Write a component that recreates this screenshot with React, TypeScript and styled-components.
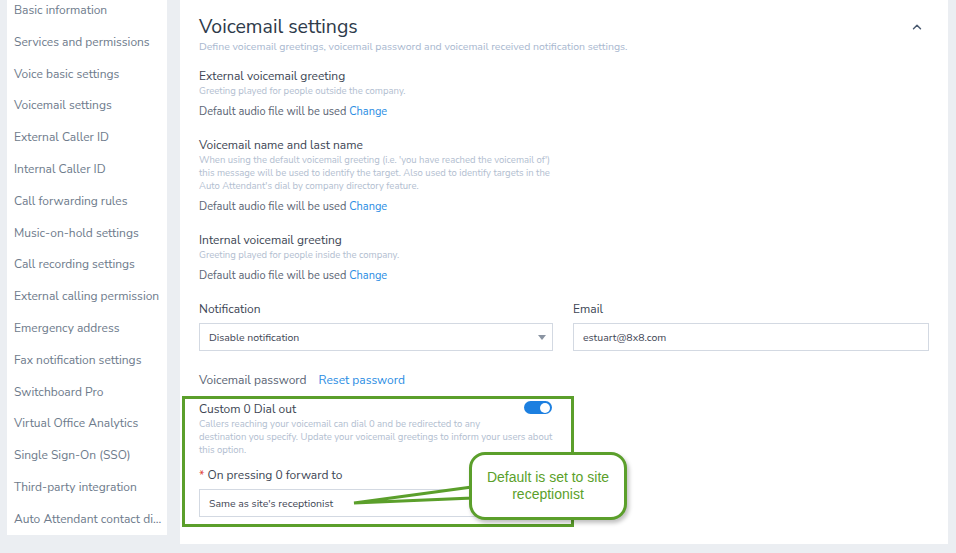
import styled, { createGlobalStyle } from 'styled-components';
import { ChevronUp } from 'lucide-react';

const GlobalStyle = createGlobalStyle`
  html, body {
    margin: 0;
    padding: 0;
    background: #ebeef2;
    font-family: "Nunito Sans", Lato, "Open Sans", sans-serif;
  }
`

const Page = styled.div`
  display: flex;
  align-items: flex-start;
  gap: 13px;
  padding-left: 7px;
  width: 956px;
  height: 553px;
  overflow: hidden;
  box-sizing: border-box;
`
const Sidebar = styled.nav`
  width: 160px;
  height: 535px;
  background: #fff;
  padding-top: 1px;
  box-sizing: border-box;
`
const NavItem = styled.div`
  height: 31.8px;
  line-height: 18px;
  padding: 0 4px 0 7px;
  font-size: 12px;
  color: #6e7b8c;
  white-space: nowrap;
  overflow: hidden;
  text-overflow: ellipsis;
`
const Main = styled.main`
  position: relative;
  width: 768px;
  height: 544px;
  background: #fff;
  padding: 14px 19px 0 19px;
  box-sizing: border-box;
`
const HeaderRow = styled.div`
  display: flex;
  justify-content: space-between;
  align-items: center;
  padding-right: 5px;
  color: #4a5a70;
`
const Title = styled.h1`
  margin: 0;
  font-size: 19.5px;
  font-weight: 400;
  line-height: 26px;
  color: #2e3a4a;
`
const Subtitle = styled.p`
  margin: 0 0 14px;
  font-size: 10.5px;
  line-height: 14px;
  color: #a9b8cf;
`
const Block = styled.section`
  margin-bottom: 18px;
`
const Label = styled.div`
  font-size: 12px;
  line-height: 16px;
  color: #3d4654;
`
const Hint = styled.div`
  font-size: 9.5px;
  line-height: 13px;
  color: #b2bed0;
  max-width: 360px;
`
const AudioLine = styled.div`
  margin-top: 8px;
  font-size: 11px;
  line-height: 14px;
  color: #5b6574;
`
const Link = styled.a`
  color: #2b8de3;
  cursor: pointer;
`
const FieldRow = styled.div`
  display: grid;
  grid-template-columns: 354px 356px;
  gap: 20px;
  margin-top: 18px;
`
const Field = styled.div`
  display: flex;
  flex-direction: column;
  gap: 6px;
`
const Box = styled.div`
  position: relative;
  height: 28px;
  border: 1px solid #d3d9e2;
  box-sizing: border-box;
  display: flex;
  align-items: center;
  padding-left: 9px;
  font-size: 10.5px;
  color: #3f4756;
`
const Caret = styled.span`
  position: absolute;
  right: 6px;
  top: 11px;
  border-left: 4px solid transparent;
  border-right: 4px solid transparent;
  border-top: 5px solid #8a94a2;
`
const PasswordRow = styled.div`
  display: flex;
  align-items: baseline;
  gap: 12px;
  margin-top: 21px;
  font-size: 12px;
  color: #5b6574;
`
const Highlight = styled.div`
  margin: 8px 0 0 -17px;
  width: 392px;
  height: 131px;
  border: 3px solid #5b9f2b;
  box-sizing: border-box;
  padding: 2px 0 0 14px;
`
const ToggleRow = styled.div`
  display: flex;
  justify-content: space-between;
  align-items: flex-start;
  padding-right: 19px;
`
const Toggle = styled.span`
  width: 28px;
  height: 13px;
  border-radius: 7px;
  background: #1c7fe0;
  margin-top: 0;
  position: relative;
  &::after {
    content: '';
    position: absolute;
    right: 2px;
    top: 1.5px;
    width: 10px;
    height: 10px;
    border-radius: 50%;
    background: #fff;
  }
`
const Required = styled.div`
  margin-top: 11px;
  font-size: 12px;
  line-height: 16px;
  color: #3d4654;
  span { color: #e0433a; }
`
const ForwardBox = styled(Box)`
  width: 354px;
  margin-top: 6px;
`
const Callout = styled.div`
  position: absolute;
  left: 289px;
  top: 452px;
  width: 158px;
  height: 68px;
  border: 3px solid #5b9f2b;
  border-radius: 16px;
  background: #fff;
  box-sizing: border-box;
  box-shadow: 2px 3px 4px rgba(0, 0, 0, 0.25);
  display: flex;
  align-items: center;
  justify-content: center;
  text-align: center;
  font-family: "Liberation Sans", Arial, sans-serif;
  font-size: 14px;
  line-height: 17px;
  color: #5b9f2b;
  padding: 0 8px;
`
const Tail = styled.svg`
  position: absolute;
  left: 172px;
  top: 484px;
  overflow: visible;
`

const navItems = [
  'Basic information', 'Services and permissions', 'Voice basic settings', 'Voicemail settings',
  'External Caller ID', 'Internal Caller ID', 'Call forwarding rules', 'Music-on-hold settings',
  'Call recording settings', 'External calling permission', 'Emergency address', 'Fax notification settings',
  'Switchboard Pro', 'Virtual Office Analytics', 'Single Sign-On (SSO)', 'Third-party integration',
  'Auto Attendant contact directory',
]

function App() {
  return (
    <Page>
      <GlobalStyle />
      <Sidebar>
        {navItems.map(item => <NavItem key={item}>{item}</NavItem>)}
      </Sidebar>
      <Main>
        <HeaderRow>
          <Title>Voicemail settings</Title>
          <ChevronUp size={14} strokeWidth={2.5} />
        </HeaderRow>
        <Subtitle>Define voicemail greetings, voicemail password and voicemail received notification settings.</Subtitle>

        <Block>
          <Label>External voicemail greeting</Label>
          <Hint>Greeting played for people outside the company.</Hint>
          <AudioLine>Default audio file will be used <Link>Change</Link></AudioLine>
        </Block>
        <Block>
          <Label>Voicemail name and last name</Label>
          <Hint>When using the default voicemail greeting (i.e. 'you have reached the voicemail of') this message will be used to identify the target. Also used to identify targets in the Auto Attendant's dial by company directory feature.</Hint>
          <AudioLine>Default audio file will be used <Link>Change</Link></AudioLine>
        </Block>
        <Block>
          <Label>Internal voicemail greeting</Label>
          <Hint>Greeting played for people inside the company.</Hint>
          <AudioLine>Default audio file will be used <Link>Change</Link></AudioLine>
        </Block>

        <FieldRow>
          <Field>
            <Label>Notification</Label>
            <Box>Disable notification<Caret /></Box>
          </Field>
          <Field>
            <Label>Email</Label>
            <Box>estuart@8x8.com</Box>
          </Field>
        </FieldRow>

        <PasswordRow>
          Voicemail password <Link>Reset password</Link>
        </PasswordRow>

        <Highlight>
          <ToggleRow>
            <Label>Custom 0 Dial out</Label>
            <Toggle />
          </ToggleRow>
          <Hint>
            Callers reaching your voicemail can dial 0 and be redirected to any<br />
            destination you specify. Update your voicemail greetings to inform your users about this option.
          </Hint>
          <Required><span>*</span> On pressing 0 forward to</Required>
          <ForwardBox>Same as site's receptionist</ForwardBox>
        </Highlight>

        <Tail width="120" height="20">
          <polygon points="2,19 120,3 120,14" fill="#fff" stroke="#5b9f2b" strokeWidth="3" strokeLinejoin="miter" />
        </Tail>
        <Callout>Default is set to site receptionist</Callout>
      </Main>
    </Page>
  )
}

export default App;
